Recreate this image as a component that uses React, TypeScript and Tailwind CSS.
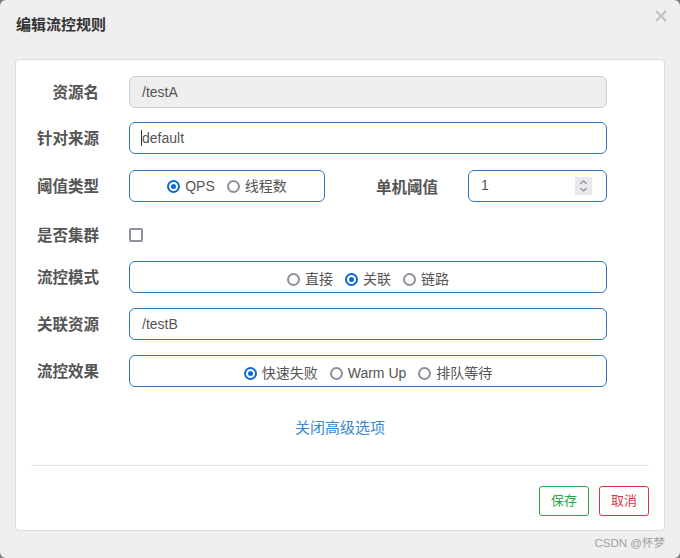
import React from "react";

const font = { fontFamily: '"Liberation Sans", "Noto Sans CJK SC", sans-serif' };

function Radio({ checked, label }: { checked?: boolean; label: string }) {
  return (
    <label className="flex items-center gap-[5px]">
      <span
        className={`w-[13px] h-[13px] rounded-full border-2 flex items-center justify-center ${
          checked ? "border-[#0b68d6]" : "border-[#8f8f9d]"
        }`}
      >
        {checked && <span className="w-[5px] h-[5px] rounded-full bg-[#0b68d6]" />}
      </span>
      <span>{label}</span>
    </label>
  );
}

function Label({ children }: { children: React.ReactNode }) {
  return (
    <div className="w-[68px] text-right text-[15.5px] font-bold text-[#555] shrink-0 pt-[2px]">{children}</div>
  );
}

const box = "h-[32px] rounded-[6px] border border-[#2f78b9] bg-white";

export default function App() {
  return (
    <div className="w-[680px] h-[558px] bg-[#7a7a7a]" style={font}>
      <div className="relative w-full h-full rounded-[6px] bg-[#efefef] px-[15px] flex flex-col">
        {/* Header */}
        <div className="h-[59px] flex items-center pb-[8px] pl-[1px] text-[15px] font-bold text-[#333]">
          编辑流控规则
        </div>
        <button className="absolute right-[12px] top-[9px] w-[14px] h-[14px]">
          <svg viewBox="0 0 14 14" className="w-[14px] h-[14px]">
            <path d="M2 2 L12 12 M12 2 L2 12" stroke="#c4c4c4" strokeWidth="2.4" />
          </svg>
        </button>

        {/* Card */}
        <div className="bg-white rounded-[4px] border border-[#dcdcdc] px-[15px] pt-[16px] pb-[14px] flex flex-col text-[14px] text-[#555]">
          <div className="flex items-center gap-[30px]">
            <Label>资源名</Label>
            <div className="w-[478px] h-[32px] rounded-[6px] border border-[#cfcfcf] bg-[#eeeeee] flex items-center pl-[12px]">
              /testA
            </div>
          </div>

          <div className="flex items-center gap-[30px] mt-[14px]">
            <Label>针对来源</Label>
            <div className={`${box} w-[478px] flex items-center pl-[12px]`}>
              <span className="w-px h-[16px] bg-[#333] -ml-px" />
              default
            </div>
          </div>

          <div className="flex items-center mt-[16px]">
            <Label>阈值类型</Label>
            <div className={`${box} w-[196px] ml-[30px] flex items-center justify-center gap-[12px]`}>
              <Radio checked label="QPS" />
              <Radio label="线程数" />
            </div>
            <div className="w-[113px] text-right text-[15.5px] font-bold text-[#555] pt-[4px]">单机阈值</div>
            <div className={`${box} w-[139px] ml-[30px] flex items-center justify-between pl-[12px] pr-[14px]`}>
              <span className="-mt-[2px]">1</span>
              <span className="w-[17px] h-[18px] bg-[#e9e9ed] flex flex-col items-center justify-center">
                <svg viewBox="0 0 10 14" className="w-[9px] h-[14px]">
                  <path d="M1.5 4.5 L5 1.5 L8.5 4.5 M1.5 9.5 L5 12.5 L8.5 9.5" stroke="#8a8a94" strokeWidth="1.2" fill="none" />
                </svg>
              </span>
            </div>
          </div>

          <div className="flex items-center gap-[30px] mt-[17px] h-[32px]">
            <Label>是否集群</Label>
            <span className="w-[14px] h-[14px] rounded-[2px] border-2 border-[#8f8f9d] bg-white" />
          </div>

          <div className="flex items-center gap-[30px] mt-[10px]">
            <Label>流控模式</Label>
            <div className={`${box} w-[478px] flex items-center justify-center gap-[12px] pt-[4px]`}>
              <Radio label="直接" />
              <Radio checked label="关联" />
              <Radio label="链路" />
            </div>
          </div>

          <div className="flex items-center gap-[30px] mt-[15px]">
            <Label>关联资源</Label>
            <div className={`${box} w-[478px] flex items-center pl-[12px]`}>/testB</div>
          </div>

          <div className="flex items-center gap-[30px] mt-[15px]">
            <Label>流控效果</Label>
            <div className={`${box} w-[478px] flex items-center justify-center gap-[12px] pt-[4px]`}>
              <Radio checked label="快速失败" />
              <Radio label="Warm Up" />
              <Radio label="排队等待" />
            </div>
          </div>

          <div className="mt-[31px] h-[20px] flex items-center justify-center text-[15px] text-[#3a87cf]">
            关闭高级选项
          </div>

          <div className="mt-[27px] h-px bg-[#e3e3e3]" />

          <div className="mt-[20px] flex justify-end gap-[10px]">
            <button className="w-[50px] h-[30px] rounded-[3px] border border-[#28a745] text-[#28a745] text-[13px] bg-white">
              保存
            </button>
            <button className="w-[50px] h-[30px] rounded-[3px] border border-[#dc3545] text-[#dc3545] text-[13px] bg-white">
              取消
            </button>
          </div>
        </div>

        <div className="mt-[4px] text-right text-[11.5px] text-[#a0a0a0]">CSDN @怀梦</div>
      </div>
    </div>
  );
}
